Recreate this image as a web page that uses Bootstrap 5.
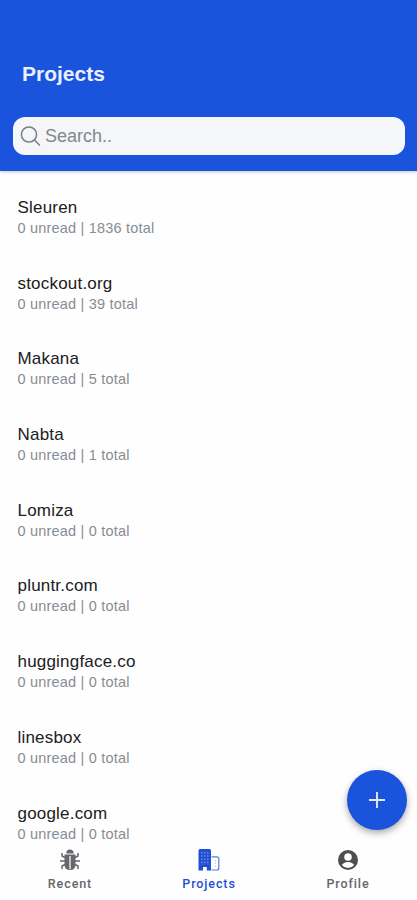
<!DOCTYPE html>
<html lang="en">
<head>
<meta charset="utf-8">
<meta name="viewport" content="width=device-width, initial-scale=1">
<title>Projects</title>
<link href="https://cdn.jsdelivr.net/npm/bootstrap@5.3.0/dist/css/bootstrap.min.css" rel="stylesheet">
<style>
  body { font-family: "Liberation Sans", Arial, sans-serif; background: #fefefe; }
  .app-header { height: 171px; background: #1a53dc; padding: 60px 12px 0 13px; box-shadow: 0 1px 3px rgba(0,0,0,.22); z-index: 1; }
  .app-title { font-size: 21px; font-weight: 700; line-height: 28px; height: 28px; padding-left: 9px; color: #eaf0ff; }
  .search-box { height: 38px; margin-top: 29px; border-radius: 12px; background: #f4f6fa; padding-left: 7px; }
  .search-box input { font-size: 18px; color: #85878b; height: 38px; margin-left: 4px; }
  .search-box input::placeholder { color: #85878b; opacity: 1; }
  .project-list { padding-top: 26px; min-height: 0; }
  .project { height: 75.7px; padding-left: 17.5px; }
  .project-name { font-size: 17px; line-height: 21px; color: #202022; letter-spacing: .2px; }
  .project-meta { font-size: 14.5px; line-height: 20px; color: #888c94; letter-spacing: .2px; }
  .tab-bar { height: 57px; background: #fefefe; }
  .tab-link { color: #66676a; font: 500 12.5px/16px Roboto, sans-serif; letter-spacing: .9px; padding-top: 5px; }
  .tab-link span { padding-left: 1px; }
  .tab-link svg { margin-bottom: 4px; }
  .tab-link.current { color: #1f50d2; }
  .add-btn { width: 60px; height: 60px; right: 10.5px; bottom: 70px; background: #1a53dc; color: #e4ebff; box-shadow: 0 3px 7px rgba(0,0,0,.34); z-index: 2; }
</style>
</head>
<body>
<div class="vh-100 d-flex flex-column overflow-hidden position-relative">
  <header class="app-header flex-shrink-0 position-relative">
    <h1 class="app-title m-0">Projects</h1>
    <label class="search-box d-flex align-items-center">
      <svg width="21" height="21" viewBox="0 0 21 21" fill="none" stroke="#7c7f84" stroke-width="1.5" stroke-linecap="round"><circle cx="9" cy="8.500" r="7.600"/><path d="M14.500 14 19.500 19"/></svg>
      <input type="text" class="border-0 bg-transparent p-0 flex-grow-1" placeholder="Search..">
    </label>
  </header>
  <main class="project-list flex-grow-1 overflow-hidden">
    <div class="project"><div class="project-name">Sleuren</div><div class="project-meta">0 unread | 1836 total</div></div>
    <div class="project"><div class="project-name">stockout.org</div><div class="project-meta">0 unread | 39 total</div></div>
    <div class="project"><div class="project-name">Makana</div><div class="project-meta">0 unread | 5 total</div></div>
    <div class="project"><div class="project-name">Nabta</div><div class="project-meta">0 unread | 1 total</div></div>
    <div class="project"><div class="project-name">Lomiza</div><div class="project-meta">0 unread | 0 total</div></div>
    <div class="project"><div class="project-name">pluntr.com</div><div class="project-meta">0 unread | 0 total</div></div>
    <div class="project"><div class="project-name">huggingface.co</div><div class="project-meta">0 unread | 0 total</div></div>
    <div class="project"><div class="project-name">linesbox</div><div class="project-meta">0 unread | 0 total</div></div>
    <div class="project"><div class="project-name">google.com</div><div class="project-meta">0 unread | 0 total</div></div>
  </main>
  <nav class="tab-bar flex-shrink-0 row g-0 text-center">
    <a class="tab-link col d-flex flex-column align-items-center text-decoration-none" href="#">
      <svg width="24" height="24" viewBox="0 0 24 24" fill="none" stroke="currentColor" stroke-width="1.500">
        <path d="M8.200 5.500C8.200 3 9.800 1.500 12 1.500s3.800 1.500 3.800 4z" fill="currentColor" stroke="none"/>
        <path d="M6.500 6.500H17.500V16.500q0 5.500-5.500 5.500t-5.500-5.500z" fill="currentColor" stroke="none"/>
        <path d="M7 9.500 4 8V5M17 9.500l3-1.500V5M7 13H2M17 13h5M7 16.500l-3 1.500v3M17 16.500l3 1.500v3"/>
        <path d="M12 8v13" stroke="#dedede" stroke-width="1.600"/>
      </svg><span>Recent</span></a>
    <a class="tab-link current col d-flex flex-column align-items-center text-decoration-none" href="#">
      <svg width="24" height="24" viewBox="0 0 24 24" fill="none" stroke="currentColor">
        <path d="M1.500 2.500Q1.500 1 3 1h9.500Q14 1 14 2.500V22.500H9.800V19H6v3.500H1.500z" fill="currentColor" stroke="none"/>
        <path d="M14.500 8.800h5.300q2 0 2 2V20q0 2-2 2h-5.300" stroke-width="1.200" opacity=".75"/>
        <path d="M4.800 4v13M7.800 4v13M10.800 4v13" stroke="#7896ee" stroke-width="1.200" stroke-dasharray="1.600 1.600"/>
        <path d="M18.300 12v7" stroke-width="1.200" stroke-dasharray="1.300 1.500" opacity=".3"/>
      </svg><span>Projects</span></a>
    <a class="tab-link col d-flex flex-column align-items-center text-decoration-none" href="#">
      <svg width="24" height="24" viewBox="0 0 24 24">
        <circle cx="12" cy="12" r="10" fill="#4d4e50"/>
        <circle cx="12" cy="9" r="3.800" fill="#fefefe"/>
        <path d="M5.800 17q2.200-3 6.200-3t6.200 3q-2.400 3-6.200 3T5.800 17z" fill="#fefefe"/>
      </svg><span>Profile</span></a>
  </nav>
  <button class="add-btn position-absolute border-0 rounded-circle p-0 d-flex align-items-center justify-content-center" type="button" aria-label="Add project">
    <svg width="18" height="18" viewBox="0 0 18 18" fill="none" stroke="currentColor" stroke-width="1.900"><path d="M9 1v16M1 9h16"/></svg>
  </button>
</div>
<script src="https://cdn.jsdelivr.net/npm/bootstrap@5.3.0/dist/js/bootstrap.bundle.min.js"></script>
</body>
</html>
